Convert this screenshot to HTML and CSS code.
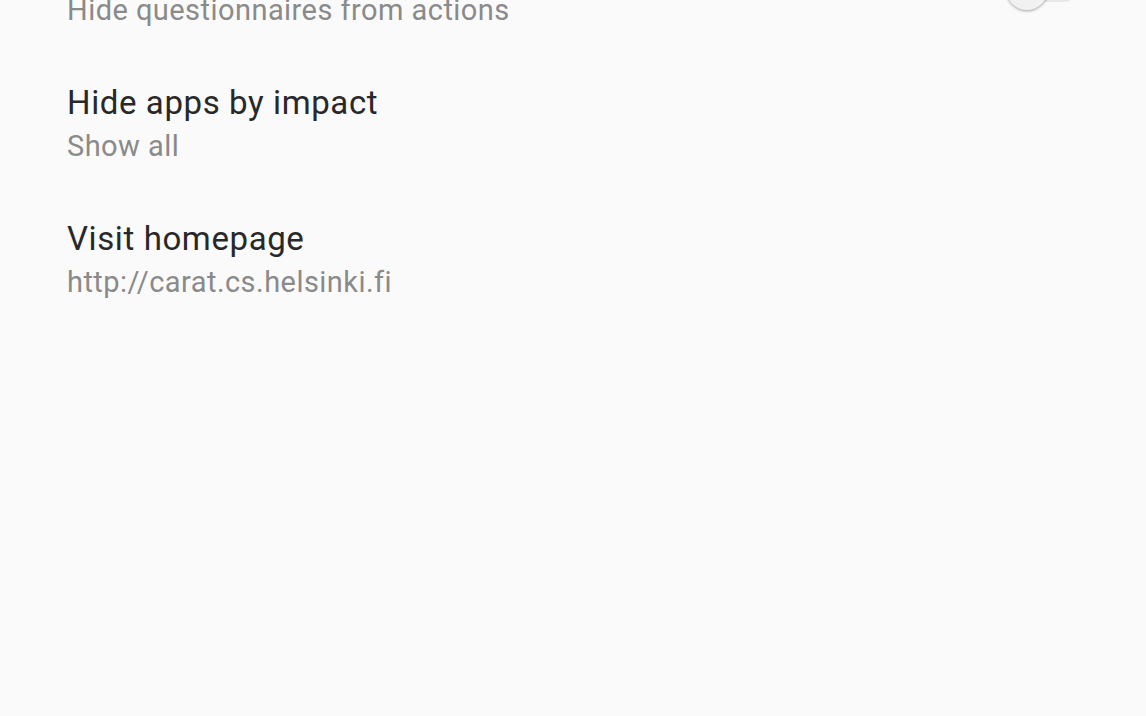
FILE: index.html
```html
<!DOCTYPE html>
<html>
<head>
<meta charset="utf-8">
<link rel="stylesheet" href="styles.css">
</head>
<body>
<div class="list">
  <div class="item">
    <div class="text">
      <div class="title">Hide questionnaires</div>
      <div class="summary">Hide questionnaires from actions</div>
    </div>
    <div class="switch"><span class="track"></span><span class="thumb"></span></div>
  </div>
  <div class="item">
    <div class="text">
      <div class="title">Hide apps by impact</div>
      <div class="summary">Show all</div>
    </div>
  </div>
  <div class="item">
    <div class="text">
      <div class="title">Visit homepage</div>
      <div class="summary">http://carat.cs.helsinki.fi</div>
    </div>
  </div>
</div>
</body>
</html>
```

FILE: styles.css
```css
html, body {
  margin: 0;
  padding: 0;
  background: #fafafa;
  height: 100%;
  overflow: hidden;
}
body {
  font-family: Roboto, "Noto Sans", sans-serif;
}
.list {
  display: flex;
  flex-direction: column;
  margin-top: -80px;
}
.item {
  display: flex;
  align-items: center;
  height: 136px;
  box-sizing: border-box;
  padding: 26px 64px 26px 67px;
}
.text {
  flex: 1;
  display: flex;
  flex-direction: column;
}
.title {
  font-size: 33px;
  line-height: 42px;
  letter-spacing: 0.6px;
  color: #282828;
}
.summary {
  margin-top: 2px;
  font-size: 29px;
  line-height: 40px;
  letter-spacing: 0.45px;
  color: #8a8a8a;
}
.switch {
  position: relative;
  width: 72px;
  height: 42px;
  margin-right: 4px;
  margin-top: 2px;
}
.track {
  position: absolute;
  left: 8px;
  right: 0;
  top: 6px;
  height: 28px;
  border-radius: 14px;
  background: #e8e8e8;
}
.thumb {
  position: absolute;
  left: 0;
  top: 0;
  width: 42px;
  height: 42px;
  border-radius: 50%;
  background: #f1f1f1;
  box-shadow: 0 1px 3px rgba(0,0,0,0.35);
}
```
